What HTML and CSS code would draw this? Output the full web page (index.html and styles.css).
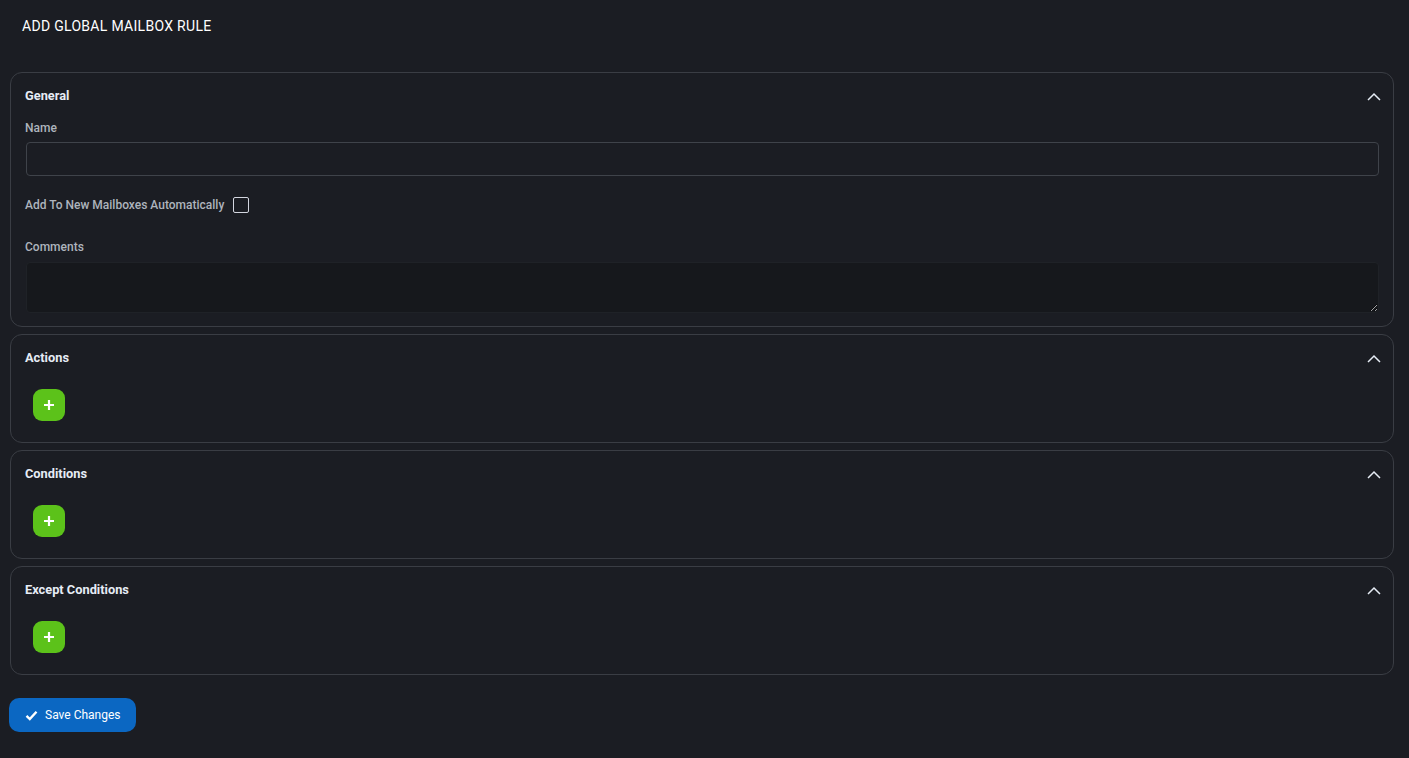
FILE: index.html
```html
<!DOCTYPE html>
<html lang="en">
<head>
<meta charset="utf-8">
<title>Add Global Mailbox Rule</title>
<link rel="stylesheet" href="styles.css">
</head>
<body>
<div class="page">
  <h1 class="title">ADD GLOBAL MAILBOX RULE</h1>

  <section class="card card-general">
    <div class="card-head">
      <span class="card-title">General</span>
      <svg class="chev" width="14" height="9" viewBox="0 0 14 9"><path d="M1 8 L7 2 L13 8" fill="none" stroke="#e6ecf5" stroke-width="1.5"/></svg>
    </div>
    <label class="label label-name">Name</label>
    <input class="input" type="text">
    <div class="check-row">
      <span class="label">Add To New Mailboxes Automatically</span>
      <span class="checkbox"></span>
    </div>
    <label class="label label-comments">Comments</label>
    <textarea class="textarea"></textarea>
  </section>

  <section class="card card-list">
    <div class="card-head">
      <span class="card-title">Actions</span>
      <svg class="chev" width="14" height="9" viewBox="0 0 14 9"><path d="M1 8 L7 2 L13 8" fill="none" stroke="#e6ecf5" stroke-width="1.5"/></svg>
    </div>
    <button class="add-btn"><svg width="12" height="12" viewBox="0 0 12 12"><path d="M6 1 V11 M1 6 H11" stroke="#fff" stroke-width="2.2"/></svg></button>
  </section>

  <section class="card card-list">
    <div class="card-head">
      <span class="card-title">Conditions</span>
      <svg class="chev" width="14" height="9" viewBox="0 0 14 9"><path d="M1 8 L7 2 L13 8" fill="none" stroke="#e6ecf5" stroke-width="1.5"/></svg>
    </div>
    <button class="add-btn"><svg width="12" height="12" viewBox="0 0 12 12"><path d="M6 1 V11 M1 6 H11" stroke="#fff" stroke-width="2.2"/></svg></button>
  </section>

  <section class="card card-list">
    <div class="card-head">
      <span class="card-title">Except Conditions</span>
      <svg class="chev" width="14" height="9" viewBox="0 0 14 9"><path d="M1 8 L7 2 L13 8" fill="none" stroke="#e6ecf5" stroke-width="1.5"/></svg>
    </div>
    <button class="add-btn"><svg width="12" height="12" viewBox="0 0 12 12"><path d="M6 1 V11 M1 6 H11" stroke="#fff" stroke-width="2.2"/></svg></button>
  </section>

  <button class="save-btn">
    <svg width="13" height="11" viewBox="0 0 13 11"><path d="M1.5 5.8 L4.8 9 L11.5 1.8" fill="none" stroke="#fff" stroke-width="2.4"/></svg>
    <span>Save Changes</span>
  </button>
</div>
</body>
</html>
```

FILE: styles.css
```css
* { box-sizing: border-box; }
html, body {
  margin: 0;
  background: #1b1d23;
  font-family: Roboto, "Liberation Sans", Arial, sans-serif;
  color: #e6ecf5;
}
.page {
  padding: 0 15px 20px 10px;
  display: flex;
  flex-direction: column;
}
.title {
  margin: 0;
  padding: 18px 0 0 12px;
  height: 72px;
  font-size: 14px;
  line-height: 16px;
  font-weight: 400;
  color: #ffffff;
  letter-spacing: 0.3px;
}
.card {
  border: 1px solid #3a3d44;
  border-radius: 12px;
  padding: 15px 12px 13px 14px;
  display: flex;
  flex-direction: column;
  margin-bottom: 7px;
}
.card-head {
  display: flex;
  align-items: center;
  justify-content: space-between;
  height: 16px;
}
.card-title {
  font-size: 12.8px;
  font-weight: 700;
  line-height: 16px;
  color: #e6ecf5;
}
.chev { display: block; }
.label {
  font-size: 12px;
  font-weight: 500;
  line-height: 16px;
  color: #aeb4bd;
}
.label-name { margin-top: 16px; }
.input {
  margin-top: 6px;
  margin-left: 1px;
  margin-right: 2px;
  height: 34px;
  background: #1b1d23;
  border: 1px solid #3f434a;
  border-radius: 4px;
  color: #e6ecf5;
}
.check-row {
  display: flex;
  align-items: center;
  gap: 9px;
  margin-top: 21px;
  height: 16px;
}
.checkbox {
  width: 16px;
  height: 16px;
  border: 1.5px solid #d3d6df;
  border-radius: 2px;
}
.label-comments { margin-top: 26px; }
.textarea {
  margin-top: 7px;
  margin-left: 1px;
  margin-right: 2px;
  height: 51px;
  background: #16181c;
  border: 1px solid #1f2227;
  border-radius: 4px;
  color: #e6ecf5;
  resize: vertical;
}
.card-list { height: 109px; }
.add-btn {
  margin-top: 23px;
  margin-left: 8px;
  width: 32px;
  height: 32px;
  border: none;
  border-radius: 9px;
  background: #5cc21a;
  display: flex;
  align-items: center;
  justify-content: center;
  padding: 0;
}
.add-btn svg { display: block; }
.save-btn {
  margin-top: 16px;
  margin-left: -1px;
  align-self: flex-start;
  width: 127px;
  height: 34px;
  border: none;
  border-radius: 10px;
  background: #0b67c2;
  color: #ffffff;
  font-family: Roboto, "Liberation Sans", Arial, sans-serif;
  font-size: 12px;
  font-weight: 400;
  display: flex;
  align-items: center;
  gap: 7px;
  padding: 0 0 0 16px;
}
.save-btn svg { display: block; }
```
